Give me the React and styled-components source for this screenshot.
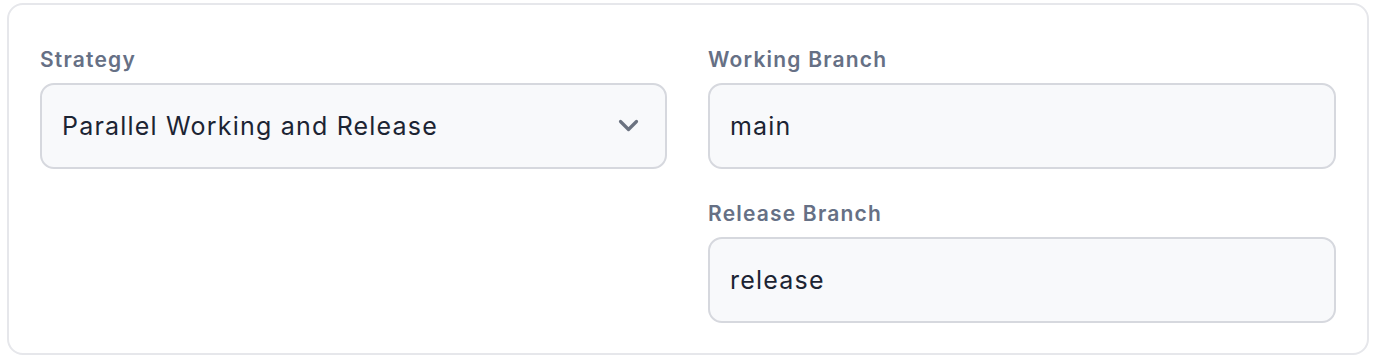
import styled, { createGlobalStyle } from 'styled-components'

const GlobalStyle = createGlobalStyle`
  html, body {
    margin: 0;
    background: #ffffff;
  }
  body {
    padding: 3px 7px;
    font-family: Inter, 'Noto Sans', sans-serif;
    -webkit-font-smoothing: antialiased;
  }
  * { box-sizing: border-box; }
`

const Card = styled.section`
  width: 1362px;
  height: 352px;
  border: 2px solid #e6e7eb;
  border-radius: 16px;
  background: #ffffff;
  padding: 41px 31px 29px;
  display: grid;
  grid-template-columns: 627px 628px;
  column-gap: 41px;
  align-items: start;
`

const Column = styled.div`
  display: flex;
  flex-direction: column;
  gap: 31px;
`

const Field = styled.div`
  display: flex;
  flex-direction: column;
`

const Label = styled.label`
  font-size: 21px;
  line-height: 28px;
  font-weight: 600;
  color: #667085;
  letter-spacing: 1.2px;
  margin-bottom: 9px;
`

const Box = styled.div`
  height: 86px;
  border: 2px solid #d6d8de;
  border-radius: 14px;
  background: #f8f9fb;
  display: flex;
  align-items: center;
  justify-content: space-between;
  padding: 0 24px 0 20px;
  font-size: 25px;
  letter-spacing: 1.2px;
  color: #1c2433;
`

const Chevron = styled.svg`
  width: 24px;
  height: 16px;
  color: #6b7280;
  flex-shrink: 0;
`

const ChevronIcon = () => (
  <Chevron viewBox="0 0 24 16" fill="none" stroke="currentColor" strokeWidth="3.2" strokeLinecap="round" strokeLinejoin="round">
    <polyline points="3.5,3.5 11.5,11.5 19.5,3.5" />
  </Chevron>
)

export default function App() {
  return (
    <>
      <GlobalStyle />
      <Card>
        <Column>
          <Field>
            <Label>Strategy</Label>
            <Box>
              <span>Parallel Working and Release</span>
              <ChevronIcon />
            </Box>
          </Field>
        </Column>
        <Column>
          <Field>
            <Label>Working Branch</Label>
            <Box>main</Box>
          </Field>
          <Field>
            <Label>Release Branch</Label>
            <Box>release</Box>
          </Field>
        </Column>
      </Card>
    </>
  )
}
